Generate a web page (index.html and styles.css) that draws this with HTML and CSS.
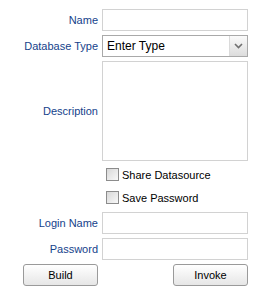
FILE: index.html
```html
<!DOCTYPE html>
<html lang="en">
  <head>
    <meta charset="UTF-8" />
    <title>Datasource</title>
    <link rel="stylesheet" href="styles.css">
  </head>
  <body>
    <form class="ds-form">
      <div class="ds-grid">
        <label class="ds-label" for="name">Name</label>
        <input class="ds-input" type="text" id="name" />

        <label class="ds-label">Database Type</label>
        <div class="ds-select">
          <span class="ds-select-text">Enter Type</span>
          <span class="ds-select-trigger">
            <svg width="9" height="6" viewBox="0 0 9 6">
              <path d="M1 1 L4.5 4.5 L8 1" fill="none" stroke="#707070" stroke-width="1.6" />
            </svg>
          </span>
        </div>

        <label class="ds-label" for="desc">Description</label>
        <textarea class="ds-textarea" id="desc"></textarea>

        <div class="ds-checks">
          <label class="ds-check"><input type="checkbox" /> Share Datasource</label>
          <label class="ds-check"><input type="checkbox" /> Save Password</label>
        </div>

        <label class="ds-label" for="login">Login Name</label>
        <input class="ds-input" type="text" id="login" />

        <label class="ds-label" for="pass">Password</label>
        <input class="ds-input" type="password" id="pass" />
      </div>

      <div class="ds-buttons">
        <button type="button" class="ds-btn">Build</button>
        <button type="button" class="ds-btn">Invoke</button>
      </div>
    </form>
  </body>
</html>
```

FILE: styles.css
```css
* {
  box-sizing: border-box;
}

body {
  margin: 0;
  font-family: "Liberation Sans", Arial, sans-serif;
  font-size: 11px;
  color: #000;
  background: #fff;
}

.ds-form {
  width: 258px;
  padding-top: 9px;
}

.ds-grid {
  display: grid;
  grid-template-columns: 98px 146px;
  column-gap: 4px;
  row-gap: 4px;
  align-items: center;
}

.ds-label {
  text-align: right;
  color: #15428b;
}

.ds-input,
.ds-textarea {
  height: 22px;
  width: 146px;
  border: 1px solid #d2d2d2;
  background: #fff;
  font: inherit;
  padding: 2px 4px;
  margin: 0;
  outline: none;
}

.ds-textarea {
  height: 100px;
  resize: none;
}

.ds-select {
  display: flex;
  height: 22px;
  border: 1px solid #a9a9a9;
  background: #fff;
}

.ds-select-text {
  flex: 1;
  padding: 0 4px;
  line-height: 20px;
  font-size: 12px;
}

.ds-select-trigger {
  width: 18px;
  display: flex;
  align-items: center;
  justify-content: center;
  border-left: 1px solid #dadada;
  background: linear-gradient(#fafafa, #dcdcdc);
}

.ds-checks {
  grid-column: 2;
  display: flex;
  flex-direction: column;
  gap: 10px;
  padding: 3px 0 4px 4px;
}

.ds-check {
  display: flex;
  align-items: center;
  gap: 3px;
  font-size: 11px;
}

.ds-check input {
  appearance: none;
  -webkit-appearance: none;
  width: 13px;
  height: 13px;
  margin: 0;
  border: 1px solid #8c8c8c;
  background: linear-gradient(135deg, #d8d8d8, #f8f8f8);
}

.ds-buttons {
  display: flex;
  justify-content: space-between;
  padding: 4px 10px 0 23px;
}

.ds-btn {
  width: 75px;
  height: 22px;
  border: 1px solid #9a9a9a;
  border-radius: 3px;
  background: linear-gradient(#ffffff, #e6e6e6);
  font: inherit;
  font-size: 11px;
  color: #000;
  padding: 0;
}
```
